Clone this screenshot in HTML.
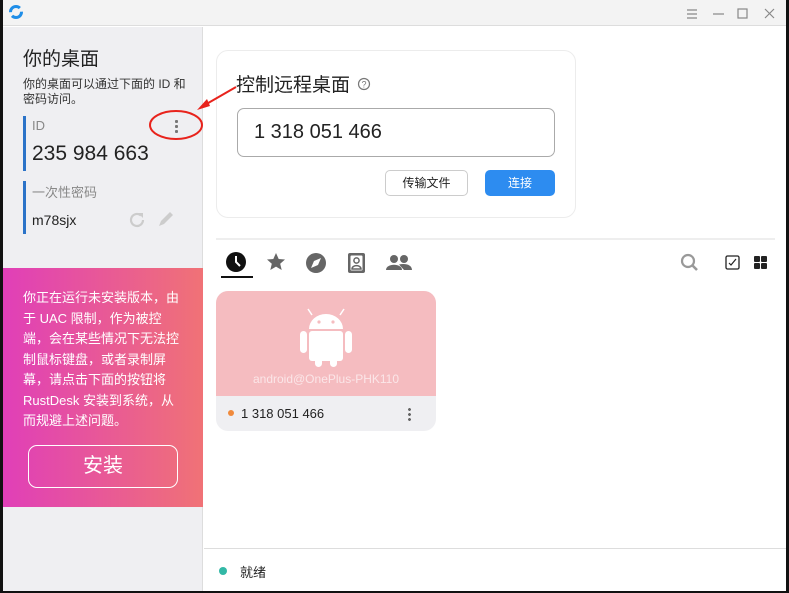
<!DOCTYPE html>
<html><head><meta charset="utf-8"><style>
*{margin:0;padding:0;box-sizing:border-box}
body{width:789px;height:593px;background:#111;position:relative;overflow:hidden;font-family:"Liberation Sans","Noto Sans CJK SC",sans-serif;color:#222}
.abs{position:absolute}
#win{left:3px;top:0;width:783px;height:591px;background:#fff}
#title{left:0;top:0;width:783px;height:26px;background:#f3f3f3;border-bottom:1px solid #ddd}
#side{left:0;top:27px;width:200px;height:564px;background:#efeff2;border-right:1px solid #ddd}
.bar{position:absolute;left:20px;width:3px;background:#2b73c8}
#pink{left:0;top:241px;width:200px;height:239px;background:linear-gradient(90deg,#e03fb8,#f07276);color:#fff;font-size:13px;line-height:20.5px;padding:20px 18px 0 20px}
#inst{left:25px;top:177px;width:150px;height:43px;border:1.5px solid #fff;border-radius:9px;color:#fff;font-size:20px;text-align:center;line-height:40px}
</style></head><body>
<div id="win" class="abs">
 <div id="title" class="abs">
  <svg class="abs" style="left:5px;top:4px" width="16" height="16" viewBox="0 0 16 16"><circle cx="8" cy="8" r="5.5" fill="none" stroke="#1f8ee8" stroke-width="3" stroke-dasharray="13 4"/></svg>
  <svg class="abs" style="left:680px;top:6px" width="100" height="16" viewBox="0 0 100 16">
   <g stroke="#888" stroke-width="1.2" fill="none"><path d="M4 4h10M4 8h10M4 12h10"/><path d="M30 8h11"/><rect x="55" y="3" width="9" height="9"/><path d="M82 3l9 9M91 3l-9 9"/></g></svg>
 </div>
 <div id="side" class="abs">
  <div class="abs" style="left:20px;top:17px;font-size:19px;color:#222">你的桌面</div>
  <div class="abs" style="left:20px;top:50px;font-size:12px;line-height:15px;color:#333;width:175px">你的桌面可以通过下面的 ID 和<br>密码访问。</div>
  <div class="bar" style="top:89px;height:55px"></div>
  <div class="abs" style="left:29px;top:91px;font-size:13px;color:#888">ID</div>
  <div class="abs" style="left:172px;top:92px;width:3px;height:14px;background:radial-gradient(circle,#777 1.5px,transparent 1.6px) 0 0/3px 5px"></div>
  <div class="abs" style="left:29px;top:115px;font-size:21px;color:#222">235 984 663</div>
  <div class="bar" style="top:154px;height:53px"></div>
  <div class="abs" style="left:29px;top:155px;font-size:13px;color:#888">一次性密码</div>
  <div class="abs" style="left:29px;top:185px;font-size:14px;color:#222">m78sjx</div>
  <svg class="abs" style="left:125px;top:182px" width="55" height="22" viewBox="0 0 55 22"><path d="M15 11a6 6 0 1 1-2-4.5" fill="none" stroke="#ccc" stroke-width="2.2"/><path d="M10 4h5v5z" fill="#ccc"/><path d="M31 17l2-5 9-9 3 3-9 9z M31 18h5" fill="#ccc"/></svg>
  <div id="pink" class="abs">你正在运行未安装版本，由于 UAC 限制，作为被控端，会在某些情况下无法控制鼠标键盘，或者录制屏幕，请点击下面的按钮将 RustDesk 安装到系统，从而规避上述问题。
   <div id="inst" class="abs">安装</div></div>
 </div>
 <div class="abs" style="left:213px;top:50px;width:360px;height:168px;border:1px solid #ececec;border-radius:12px"></div>
 <div class="abs" style="left:233px;top:70px;font-size:19px;color:#222">控制远程桌面</div>
 <svg class="abs" style="left:354px;top:77px" width="14" height="14" viewBox="0 0 14 14"><circle cx="7" cy="7" r="5.5" fill="none" stroke="#777" stroke-width="1.2"/><text x="7" y="10.5" font-size="9" text-anchor="middle" fill="#777" font-family="Liberation Sans">?</text></svg>
 <div class="abs" style="left:234px;top:108px;width:318px;height:49px;border:1px solid #aaa;border-radius:7px;font-size:20px;padding:12px 0 0 16px;color:#222">1 318 051 466</div>
 <div class="abs" style="left:382px;top:170px;width:83px;height:26px;border:1px solid #ccc;border-radius:5px;font-size:12px;text-align:center;line-height:24px">传输文件</div>
 <div class="abs" style="left:482px;top:170px;width:70px;height:26px;background:#2d8cf0;border-radius:5px;font-size:12px;color:#fff;text-align:center;line-height:26px">连接</div>
 <div class="abs" style="left:213px;top:238px;width:559px;height:2px;background:#eee"></div>
 <svg class="abs" style="left:218px;top:250px" width="200" height="30" viewBox="0 0 200 30">
  <circle cx="15" cy="12" r="10" fill="#111"/><path d="M15 6v6l4 4" stroke="#fff" stroke-width="2" fill="none"/>
  <rect x="-1" y="26" width="33" height="2" fill="#111"/>
  <path d="M55 3l2.7 6 6.3.5-4.8 4.2 1.5 6.3-5.7-3.4-5.7 3.4 1.5-6.3-4.8-4.2 6.3-.5z" fill="#666"/>
  <circle cx="95" cy="13" r="10" fill="#666"/><path d="M100 8l-3 7-7 3 3-7z" fill="#fff"/>
  <rect x="127" y="3" width="17" height="20" rx="2" fill="#666"/><rect x="129.5" y="5.5" width="12" height="15" rx="1" fill="#fff"/><circle cx="135.5" cy="10.5" r="2.6" fill="none" stroke="#666" stroke-width="1.5"/><path d="M131 19c0-4.5 9-4.5 9 0z" fill="none" stroke="#666" stroke-width="1.5"/>
  <circle cx="173" cy="9" r="4" fill="#666"/><circle cx="183" cy="9" r="4" fill="#666"/><path d="M165 20c0-7 16-7 16 0zM178 14.5c6-1.5 13 0 13 5.5h-8z" fill="#666"/>
 </svg>
 <svg class="abs" style="left:676px;top:252px" width="100" height="22" viewBox="0 0 100 22">
  <circle cx="9" cy="9" r="6" fill="none" stroke="#999" stroke-width="2.2"/><path d="M13 13l5 5" stroke="#999" stroke-width="2.6"/>
  <rect x="47" y="4" width="13" height="13" rx="1.5" fill="none" stroke="#222" stroke-width="1.3"/><path d="M50 11l2 2 5-6" fill="none" stroke="#222" stroke-width="1.2"/>
  <rect x="75" y="4" width="6" height="6" rx="1" fill="#222"/><rect x="82" y="4" width="6" height="6" rx="1" fill="#222"/><rect x="75" y="11" width="6" height="6" rx="1" fill="#222"/><rect x="82" y="11" width="6" height="6" rx="1" fill="#222"/>
 </svg>
 <div class="abs" style="left:213px;top:291px;width:220px;height:140px;border-radius:12px;overflow:hidden;background:#efeff2">
  <div style="height:105px;background:#f5bcc0;position:relative">
   <svg class="abs" style="left:82px;top:12px" width="56" height="64" viewBox="0 0 56 64"><g fill="#fff"><path d="M10 6l4 6M46 6l-4 6" stroke="#fff" stroke-width="1.5"/><path d="M11 26a17 15 0 0 1 34 0z"/><rect x="11" y="28" width="34" height="30" rx="3"/><rect x="2" y="28" width="7" height="22" rx="3.5"/><rect x="47" y="28" width="7" height="22" rx="3.5"/><rect x="17" y="50" width="7" height="14" rx="3.5"/><rect x="32" y="50" width="7" height="14" rx="3.5"/></g><circle cx="21" cy="19" r="1.6" fill="#f5bcc0"/><circle cx="35" cy="19" r="1.6" fill="#f5bcc0"/></svg>
   <div class="abs" style="left:0;width:220px;top:81px;text-align:center;font-size:12px;color:#fbe6e8">android@OnePlus-PHK110</div>
  </div>
  <div class="abs" style="left:12px;top:119px;width:6px;height:6px;border-radius:3px;background:#f08a3c"></div>
  <div class="abs" style="left:25px;top:115px;font-size:13px;color:#222">1 318 051 466</div>
  <div class="abs" style="left:192px;top:116px;width:3px;height:14px;background:radial-gradient(circle,#666 1.4px,transparent 1.5px) 0 0/3px 5px"></div>
 </div>
 <div class="abs" style="left:201px;top:548px;width:582px;height:1px;background:#ddd"></div>
 <div class="abs" style="left:216px;top:567px;width:8px;height:8px;border-radius:4px;background:#33b8a6"></div>
 <div class="abs" style="left:237px;top:562px;font-size:13px;color:#222">就绪</div>
</div>
<svg class="abs" style="left:0;top:0" width="789" height="593" viewBox="0 0 789 593">
 <ellipse cx="176" cy="125" rx="26" ry="14" fill="none" stroke="#e8231c" stroke-width="2"/>
 <path d="M236 87L203 106" stroke="#e8231c" stroke-width="2"/><path d="M197 110l10-11 3 7z" fill="#e8231c"/>
</svg>
</body></html>
